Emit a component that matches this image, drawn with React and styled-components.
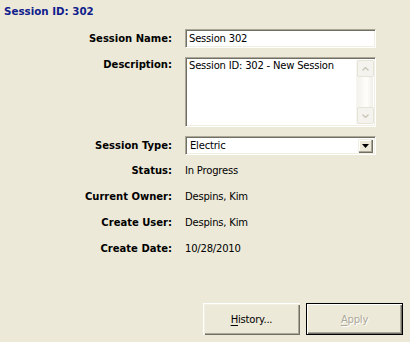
import React from "react";
import styled, { createGlobalStyle } from "styled-components";

const GlobalStyle = createGlobalStyle`
  html, body {
    margin: 0;
    padding: 0;
    background: #ece9d8;
  }
  * {
    box-sizing: border-box;
  }
`;

const Page = styled.div`
  width: 410px;
  height: 342px;
  display: flex;
  flex-direction: column;
  padding: 4px 7px 7px 4px;
  background: #ece9d8;
  font-family: "DejaVu Sans", Verdana, sans-serif;
  font-size: 10px;
  color: #000;
`;

const Title = styled.div`
  height: 14px;
  line-height: 14px;
  font-weight: bold;
  font-size: 10.3px;
  color: #10208c;
`;

const Form = styled.div`
  display: flex;
  flex-direction: column;
  margin-top: 11px;
  margin-left: -4px;
`;

const Row = styled.div`
  display: grid;
  grid-template-columns: 172px 191px;
  column-gap: 13px;
  align-items: ${(p) => (p.$top ? "start" : "center")};
  height: ${(p) => p.$h}px;
  margin-bottom: ${(p) => p.$gap || 0}px;
`;

const Label = styled.div`
  text-align: right;
  font-weight: bold;
  white-space: nowrap;
  padding-top: ${(p) => (p.$top ? 2 : 0)}px;
`;

const Value = styled.div`
  padding-left: 0;
  letter-spacing: -0.2px;
  white-space: nowrap;
`;

const Sunken = styled.div`
  position: relative;
  height: 100%;
  background: #fff;
  border-top: 1px solid #aca899;
  border-left: 1px solid #aca899;
  border-right: 1px solid #fff;
  border-bottom: 1px solid #fff;
  box-shadow: inset 1px 1px 0 #716f64, inset -1px -1px 0 #f1efe2;
  padding: ${(p) => p.$pad || "0 0 0 3px"};
  letter-spacing: -0.2px;
  display: flex;
  align-items: ${(p) => (p.$top ? "flex-start" : "center")};
`;

const Scrollbar = styled.div`
  position: absolute;
  top: 2px;
  right: 2px;
  bottom: 2px;
  width: 17px;
  display: flex;
  flex-direction: column;
  justify-content: space-between;
  background: linear-gradient(to right, #f3f2ec, #fefefb 60%, #f0efe8);
  border-left: 1px solid #f6f5f0;
`;

const ScrollButton = styled.div`
  width: 17px;
  height: 17px;
  border: 1px solid #e6e4d9;
  border-radius: 2px;
  background: #f4f3ee;
  display: flex;
  align-items: center;
  justify-content: center;
`;

const DropButton = styled.div`
  position: absolute;
  top: 2px;
  right: 2px;
  width: 15px;
  height: 14px;
  background: #ece9d8;
  box-shadow: inset 1px 1px 0 #f1efe2, inset -1px -1px 0 #716f64, inset -2px -2px 0 #aca899, inset 2px 2px 0 #fff;
  display: flex;
  align-items: center;
  justify-content: center;
`;

const Footer = styled.div`
  margin-top: auto;
  display: flex;
  justify-content: flex-end;
  gap: 6px;
`;

const Button = styled.div`
  width: 97px;
  height: 32px;
  display: flex;
  align-items: center;
  justify-content: center;
  background: #ece9d8;
  font-size: 10px;
  letter-spacing: -0.2px;
  color: ${(p) => (p.$disabled ? "#aca899" : "#000")};
  text-shadow: ${(p) => (p.$disabled ? "1px 1px 0 #fff" : "none")};
  border: ${(p) => (p.$default ? "1px solid #000" : "none")};
  box-shadow: ${(p) =>
    p.$default
      ? "inset 1px 1px 0 #fff, inset -1px -1px 0 #716f64, inset -2px -2px 0 #aca899"
      : "inset 1px 1px 0 #fff, inset 2px 2px 0 #f1efe2, inset -1px -1px 0 #716f64, inset -2px -2px 0 #aca899"};
  u {
    text-decoration: underline;
    text-underline-offset: 2px;
  }
`;

const Chevron = ({ up }) => (
  <svg width="7" height="4" viewBox="0 0 7 4">
    <path
      d={up ? "M0.5 3.5 L3.5 0.5 L6.5 3.5" : "M0.5 0.5 L3.5 3.5 L6.5 0.5"}
      fill="none"
      stroke="#c9c6b8"
      strokeWidth="1.4"
    />
  </svg>
);

const details = [
  ["Status:", "In Progress"],
  ["Current Owner:", "Despins, Kim"],
  ["Create User:", "Despins, Kim"],
  ["Create Date:", "10/28/2010"],
];

export default function App() {
  return (
    <>
      <GlobalStyle />
      <Page>
        <Title>Session ID: 302</Title>
        <Form>
          <Row $h={19} $gap={9}>
            <Label>Session Name:</Label>
            <Sunken>Session 302</Sunken>
          </Row>
          <Row $h={70} $gap={9} $top>
            <Label $top>Description:</Label>
            <Sunken $top $pad="2px 0 0 3px">
              Session ID: 302 - New Session
              <Scrollbar>
                <ScrollButton>
                  <Chevron up />
                </ScrollButton>
                <ScrollButton>
                  <Chevron />
                </ScrollButton>
              </Scrollbar>
            </Sunken>
          </Row>
          <Row $h={19} $gap={2}>
            <Label>Session Type:</Label>
            <Sunken $pad="0 0 0 4px">
              Electric
              <DropButton>
                <svg width="7" height="4" viewBox="0 0 7 4">
                  <path d="M0 0 H7 L3.5 4 Z" fill="#000" />
                </svg>
              </DropButton>
            </Sunken>
          </Row>
          {details.map(([label, value]) => (
            <Row key={label} $h={26}>
              <Label>{label}</Label>
              <Value>{value}</Value>
            </Row>
          ))}
        </Form>
        <Footer>
          <Button>
            <span>
              <u>H</u>istory...
            </span>
          </Button>
          <Button $default $disabled>
            <span>
              <u>A</u>pply
            </span>
          </Button>
        </Footer>
      </Page>
    </>
  );
}
